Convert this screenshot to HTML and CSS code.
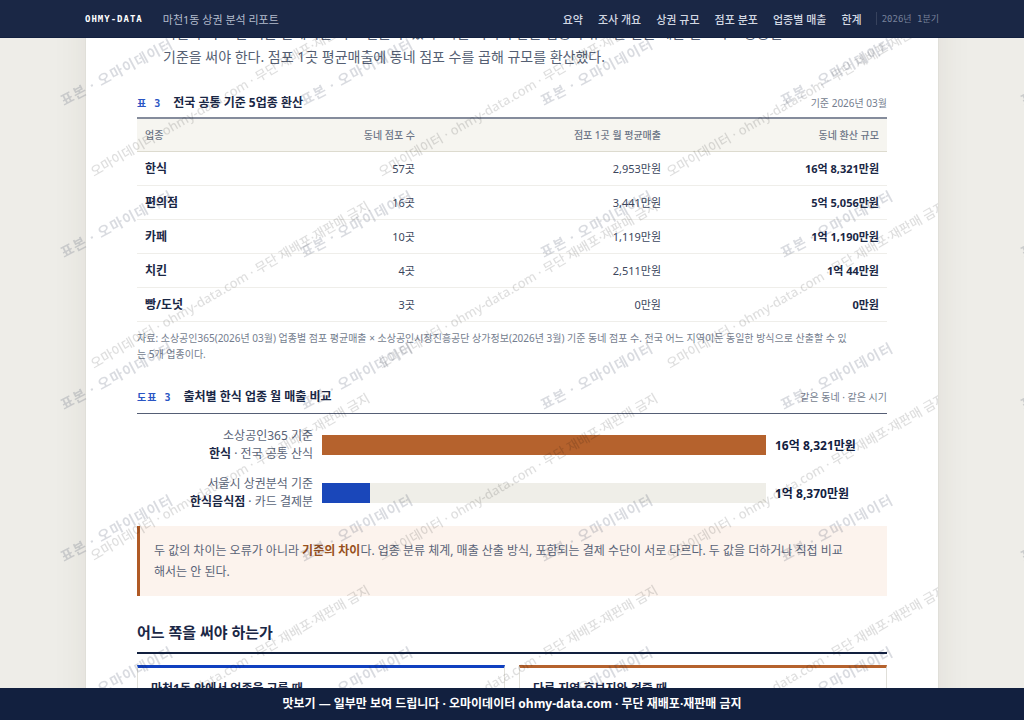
FILE: index.html
```html
<!DOCTYPE html>
<html lang="ko">
<head>
    <meta charset="UTF-8">
    <meta name="viewport" content="width=device-width, initial-scale=1.0">
    <title>마천1동 상권 분석 리포트</title>
    <link rel="stylesheet" href="styles.css">
</head>
<body>

    <header class="topbar">
        <div class="topbar-inner">
            <span class="brand">OHMY-DATA</span>
            <span class="report-name">마천1동 상권 분석 리포트</span>
            <nav class="menu">
                <a href="#summary">요약</a>
                <a href="#overview">조사 개요</a>
                <a href="#size">상권 규모</a>
                <a href="#stores">점포 분포</a>
                <a href="#sales">업종별 매출</a>
                <a href="#limits">한계</a>
            </nav>
            <span class="issue">2026년 1분기</span>
        </div>
    </header>

    <main class="sheet">
        <p class="lead">어떤 수치도 한 기준 안에서만 서로 견줄 수 있다. 다른 지역의 같은 업종과 규모를 견줄 때는 반드시 소상공인365<br>기준을 써야 한다. 점포 1곳 평균매출에 동네 점포 수를 곱해 규모를 환산했다.</p>

        <section class="figure">
            <div class="caption">
                <span class="caption-no">표 3</span>
                <h3>전국 공통 기준 5업종 환산</h3>
                <span class="caption-note">기준 2026년 03월</span>
            </div>
            <table class="data">
                <thead>
                    <tr><th>업종</th><th>동네 점포 수</th><th>점포 1곳 월 평균매출</th><th>동네 환산 규모</th></tr>
                </thead>
                <tbody>
                    <tr><td>한식</td><td>57곳</td><td>2,953만원</td><td>16억 8,321만원</td></tr>
                    <tr><td>편의점</td><td>16곳</td><td>3,441만원</td><td>5억 5,056만원</td></tr>
                    <tr><td>카페</td><td>10곳</td><td>1,119만원</td><td>1억 1,190만원</td></tr>
                    <tr><td>치킨</td><td>4곳</td><td>2,511만원</td><td>1억 44만원</td></tr>
                    <tr><td>빵/도넛</td><td>3곳</td><td>0만원</td><td>0만원</td></tr>
                </tbody>
            </table>
            <p class="source">자료: 소상공인365(2026년 03월) 업종별 점포 평균매출 × 소상공인시장진흥공단 상가정보(2026년 3월) 기준 동네 점포 수. 전국 어느 지역이든 동일한 방식으로 산출할 수 있<br>는 5개 업종이다.</p>
        </section>

        <section class="figure">
            <div class="caption caption-thin">
                <span class="caption-no">도표 3</span>
                <h3>출처별 한식 업종 월 매출 비교</h3>
                <span class="caption-note">같은 동네 · 같은 시기</span>
            </div>
            <div class="bars">
                <div class="bar-row">
                    <div class="bar-label">소상공인365 기준<br><b>한식</b> · 전국 공통 산식</div>
                    <div class="track"><div class="fill fill-rust" style="width: 100%"></div></div>
                    <div class="bar-value">16억 8,321만원</div>
                </div>
                <div class="bar-row">
                    <div class="bar-label">서울시 상권분석 기준<br><b>한식음식점</b> · 카드 결제분</div>
                    <div class="track"><div class="fill fill-blue" style="width: 10.9%"></div></div>
                    <div class="bar-value">1억 8,370만원</div>
                </div>
            </div>
            <p class="callout">두 값의 차이는 오류가 아니라 <b>기준의 차이</b>다. 업종 분류 체계, 매출 산출 방식, 포함되는 결제 수단이 서로 다르다. 두 값을 더하거나 직접 비교<br>해서는 안 된다.</p>
        </section>

        <h2>어느 쪽을 써야 하는가</h2>
        <div class="choices">
            <article class="choice choice-blue">
                <h4>마천1동 안에서 업종을 고를 때</h4>
            </article>
            <article class="choice choice-rust">
                <h4>다른 지역 후보지와 견줄 때</h4>
            </article>
        </div>

        <svg class="sheet-mark" width="100%" height="100%" aria-hidden="true">
            <defs>
                <pattern id="mark-small" width="288" height="192" patternUnits="userSpaceOnUse">
                    <text x="8" y="177" transform="rotate(-30 8 177)">오마이데이터 · ohmy-data.com · 무단 재배포·재판매 금지</text>
                </pattern>
            </defs>
            <rect width="100%" height="100%" fill="url(#mark-small)"/>
        </svg>
    </main>

    <svg class="page-mark" width="100%" height="100%" aria-hidden="true">
        <defs>
            <pattern id="mark-large" width="240" height="152" patternUnits="userSpaceOnUse">
                <text x="64" y="106" transform="rotate(-28 64 106)">표본 · 오마이데이터</text>
            </pattern>
        </defs>
        <rect width="100%" height="100%" fill="url(#mark-large)"/>
    </svg>

    <footer class="notice">맛보기 — 일부만 보여 드립니다 · 오마이데이터 ohmy-data.com · 무단 재배포·재판매 금지</footer>

</body>
</html>
```

FILE: styles.css
```css
* {
    box-sizing: border-box;
}

html, body {
    height: 100%;
}

body {
    margin: 0;
    overflow: hidden;
    background: #eeede8;
    color: #4a5468;
    font-family: "Noto Sans", "Noto Sans CJK KR", sans-serif;
    font-size: 12px;
}

h2, h3, h4, p {
    margin: 0;
}

/* Top bar */
.topbar {
    position: fixed;
    top: 0;
    left: 0;
    right: 0;
    z-index: 10;
    height: 38px;
    background: #1a2745;
    border-bottom: 1px solid #12203f;
}

.topbar-inner {
    display: flex;
    align-items: center;
    max-width: 854px;
    height: 100%;
    margin: 0 auto;
}

.brand {
    margin-right: 20px;
    color: #fff;
    font-family: "DejaVu Sans Mono", monospace;
    font-size: 9px;
    font-weight: bold;
    letter-spacing: 1px;
}

.report-name {
    color: #b3bccd;
    font-size: 11px;
}

.menu {
    display: flex;
    gap: 15px;
    margin-left: auto;
}

.menu a {
    color: #d3d8e3;
    font-size: 11px;
    font-weight: 500;
    text-decoration: none;
}

.issue {
    margin-left: 14px;
    padding-left: 5px;
    border-left: 1px solid #37425d;
    color: #77819a;
    font-family: "DejaVu Sans Mono", "Noto Sans CJK KR", monospace;
    font-size: 9px;
}

/* Report sheet */
.sheet {
    position: relative;
    max-width: 854px;
    min-height: 100%;
    margin: 0 auto;
    padding: 21px 51px 40px;
    background: #fff;
    border: 1px solid #e0dfd9;
    border-width: 0 1px;
    box-shadow: 0 0 32px rgba(60, 55, 40, 0.08);
}

.lead {
    margin: 0 26px 25px;
    color: #555f73;
    font-size: 14px;
    line-height: 24px;
    white-space: nowrap;
}

.caption {
    display: flex;
    align-items: baseline;
    padding-bottom: 4px;
    border-bottom: 2px solid #858c9c;
    line-height: 18px;
}

.caption-thin {
    padding-bottom: 6px;
    border-bottom: 1px solid #555e75;
}

.caption-no {
    margin-right: 12px;
    color: #2a55c4;
    font-family: "DejaVu Sans Mono", "Noto Sans CJK KR", monospace;
    font-size: 10px;
    font-weight: bold;
    letter-spacing: 1px;
}

.caption h3 {
    color: #1a2745;
    font-size: 12px;
    font-weight: bold;
}

.caption-note {
    margin-left: auto;
    color: #747d8e;
    font-size: 10px;
}

/* Table */
.data {
    width: 100%;
    border-collapse: collapse;
    color: #3b465d;
}

.data th {
    width: 246px;
    height: 32px;
    padding: 0 8px;
    background: #f6f5f0;
    border-bottom: 1px solid #dddbcf;
    color: #6b7486;
    font-size: 10px;
    font-weight: 500;
    text-align: right;
}

.data td {
    height: 34px;
    padding: 0 8px;
    border-bottom: 1px solid #efeeea;
    font-size: 11px;
    text-align: right;
}

.data th:first-child,
.data td:first-child {
    width: auto;
    text-align: left;
}

.data th:nth-child(2) {
    width: 150px;
}

.data th:nth-child(4) {
    width: 218px;
}

.data td:first-child,
.data td:last-child {
    color: #1a2745;
    font-weight: bold;
}

.data td:first-child {
    font-size: 12px;
}

.source {
    margin: 8px 0 26px;
    color: #747d8e;
    font-size: 10px;
    line-height: 16px;
}

/* Bar chart */
.bars {
    padding: 13px 0 15px;
}

.bar-row {
    display: grid;
    grid-template-columns: 176px 1fr 112px;
    gap: 9px;
    align-items: center;
    margin-bottom: 12px;
}

.bar-row:last-child {
    margin-bottom: 0;
}

.bar-label {
    color: #5a6478;
    font-size: 12px;
    line-height: 18px;
    text-align: right;
}

.bar-label b {
    color: #1a2745;
}

.track {
    height: 20px;
    background: #efeee8;
}

.fill {
    height: 100%;
}

.fill-rust {
    background: #b5622d;
}

.fill-blue {
    background: #1a47ba;
}

.bar-value {
    color: #12203f;
    font-size: 12px;
    font-weight: bold;
}

.callout {
    padding: 14px;
    background: #fcf3ed;
    border-left: 3px solid #b05a25;
    color: #5a6478;
    font-size: 12px;
    line-height: 21px;
}

.callout b {
    color: #985020;
}

/* Closing section */
.sheet h2 {
    margin: 24px 0 11px;
    padding-bottom: 8px;
    border-bottom: 2px solid #12203f;
    color: #1a2745;
    font-size: 15px;
    font-weight: bold;
    line-height: 24px;
}

.choices {
    display: grid;
    grid-template-columns: 1fr 1fr;
    gap: 14px;
}

.choice {
    padding: 11px 13px;
    border: 1px solid #e0dfd9;
}

.choice-blue {
    border-top: 3px solid #1040c0;
}

.choice-rust {
    border-top: 3px solid #b5622d;
}

.choice h4 {
    color: #1a2745;
    font-size: 12px;
    line-height: 20px;
}

/* Repeating marks laid over the report */
.sheet-mark,
.page-mark {
    position: absolute;
    top: 0;
    left: 0;
    pointer-events: none;
}

.sheet-mark text {
    fill: #000;
    fill-opacity: 0.13;
    font-size: 13px;
    font-weight: 500;
}

.page-mark {
    position: fixed;
}

.page-mark text {
    fill: #12203f;
    fill-opacity: 0.16;
    font-size: 14px;
    font-weight: bold;
    letter-spacing: 1px;
}

/* Bottom bar */
.notice {
    position: fixed;
    left: 0;
    right: 0;
    bottom: 0;
    z-index: 10;
    height: 32px;
    background: #12203f;
    color: #fff;
    font-size: 12px;
    font-weight: bold;
    line-height: 32px;
    text-align: center;
}
```
